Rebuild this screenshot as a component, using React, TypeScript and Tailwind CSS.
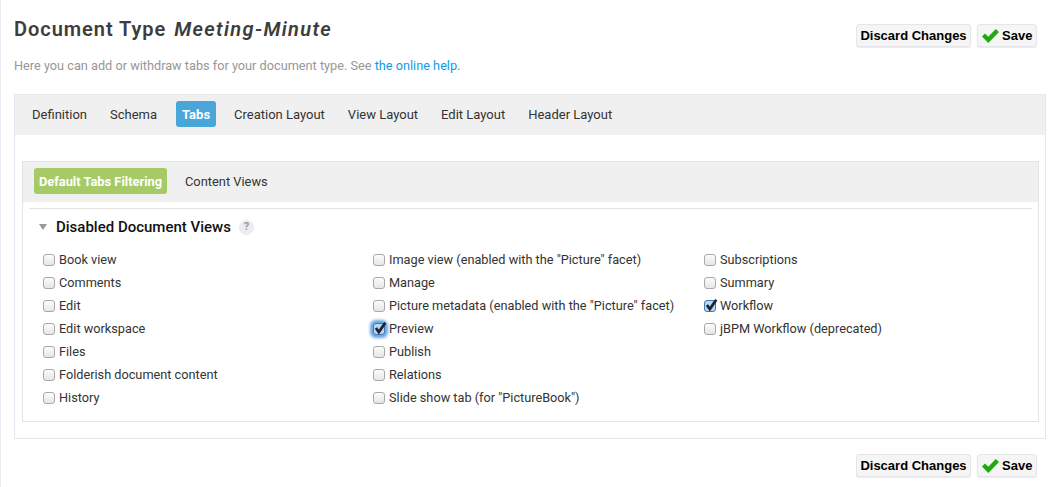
const viewTabs = ['Definition', 'Schema', 'Tabs', 'Creation Layout', 'View Layout', 'Edit Layout', 'Header Layout'];

const columns = [
  ['Book view', 'Comments', 'Edit', 'Edit workspace', 'Files', 'Folderish document content', 'History'],
  [
    'Image view (enabled with the "Picture" facet)',
    'Manage',
    'Picture metadata (enabled with the "Picture" facet)',
    'Preview',
    'Publish',
    'Relations',
    'Slide show tab (for "PictureBook")',
  ],
  ['Subscriptions', 'Summary', 'Workflow', 'jBPM Workflow (deprecated)'],
];

function CheckMark({ className }: { className: string }) {
  return (
    <svg viewBox="0 0 17 14" className={className}>
      <path d="M0 7.5 L3 4.5 L6.3 7.8 L13.8 0 L17 3 L6.3 14 Z" fill="#22a80f" />
    </svg>
  );
}

function Actions() {
  return (
    <div className="flex gap-[6px] font-['Liberation_Sans',Arial,sans-serif] text-[13px] font-bold text-black">
      <button className="h-[23px] w-[115px] rounded-[3px] border border-[#e6e6ea] bg-[#f5f5f5] shadow-[0_1px_1px_rgba(0,0,0,0.08)]">
        Discard Changes
      </button>
      <button className="flex h-[23px] w-[60px] items-center gap-[3px] rounded-[3px] border border-[#e6e6ea] bg-[#f5f5f5] pl-[4px] shadow-[0_1px_1px_rgba(0,0,0,0.08)]">
        <CheckMark className="h-[14px] w-[17px]" />
        Save
      </button>
    </div>
  );
}

function Box({ checked, focused }: { checked: boolean; focused: boolean }) {
  return (
    <span
      className={`relative mr-[4px] h-[12px] w-[12px] shrink-0 rounded-[3px] border ${
        checked ? 'border-[#4a78b0] bg-[#bcd6f2]' : 'border-[#a8a8a8] bg-gradient-to-b from-[#fcfcfc] to-[#e6e6e6]'
      } ${focused ? 'shadow-[0_0_3px_3px_#62a6e6]' : ''}`}
    >
      {checked && (
        <svg viewBox="0 0 12 12" className="absolute left-[-1px] top-[-3px] h-[14px] w-[14px]">
          <path d="M2.5 6 L5 9.5 L10.5 1.5" fill="none" stroke="#1a2433" strokeWidth="2.4" />
        </svg>
      )}
    </span>
  );
}

export default function App() {
  return (
    <div className="h-[487px] w-[1060px] overflow-hidden border-l border-[#ebebf3] bg-white font-['Roboto',sans-serif] text-[13px] text-[#333]">
      <div className="flex h-[94px] justify-between pl-[13px] pr-[23px]">
        <div>
          <h1 className="mt-[16px] text-[20px] leading-[26px] font-semibold tracking-[0.95px] text-[#3d3d3d]">
            Document Type <em className="ml-[2px] font-semibold tracking-[1.35px]">Meeting-Minute</em>
          </h1>
          <p className="mt-[15px] text-[12.72px] leading-[18px] text-[#979797]">
            Here you can add or withdraw tabs for your document type. See{' '}
            <span className="text-[#0f9be8]">the online help.</span>
          </p>
        </div>
        <div className="pt-[24px]">
          <Actions />
        </div>
      </div>

      <div className="ml-[13px] h-[345px] w-[1032px] border border-[#e6e6ec]">
        <div className="flex h-[40px] items-center gap-[15px] bg-[#f0f0f0] pl-[13px]">
          {viewTabs.map((tab) => (
            <span
              key={tab}
              className={
                tab === 'Tabs'
                  ? 'mb-[2px] mr-[-1px] flex h-[26px] w-[40px] items-center justify-center rounded-[3px] bg-[#4aa5d9] pt-[2px] font-bold text-white'
                  : 'flex h-[26px] items-center px-[4px] text-[#333]'
              }
            >
              {tab}
            </span>
          ))}
        </div>

        <div className="ml-[7px] mr-[6px] mt-[26px] h-[261px] border border-[#e4e4e4]">
          <div className="flex h-[40px] items-center gap-[18px] bg-[#f0f0f0] pl-[11px] text-[12.85px]">
            <span className="mb-[2px] flex h-[26px] w-[133px] items-center justify-center rounded-[3px] bg-[#a6cb66] pt-[2px] font-bold text-white">
              Default Tabs Filtering
            </span>
            <span className="text-[#333]">Content Views</span>
          </div>
          <div className="mx-[6px] mt-[6px] border-t border-[#e4e4e4]">
            <div className="flex h-[36px] items-center pl-[10px]">
              <span className="h-0 w-0 border-x-[4px] border-t-[6px] border-x-transparent border-t-[#999]" />
              <h2 className="ml-[9px] text-[15px] font-medium text-[#111]">Disabled Document Views</h2>
              <span className="ml-[8px] flex h-[15px] w-[15px] items-center justify-center rounded-full bg-[#ebebf2] text-[11px] font-bold text-[#999]">
                ?
              </span>
            </div>
            <div className="grid grid-cols-[330px_331px_1fr] pl-[14px] pt-[3px] text-[12.72px]">
              {columns.map((items, index) => (
                <div key={index}>
                  {items.map((label) => (
                    <div key={label} className="flex h-[23px] items-center">
                      <Box
                        checked={label === 'Preview' || label === 'Workflow'}
                        focused={label === 'Preview'}
                      />
                      <span>{label}</span>
                    </div>
                  ))}
                </div>
              ))}
            </div>
          </div>
        </div>
      </div>

      <div className="flex justify-end pr-[23px] pt-[15px]">
        <Actions />
      </div>
    </div>
  );
}
